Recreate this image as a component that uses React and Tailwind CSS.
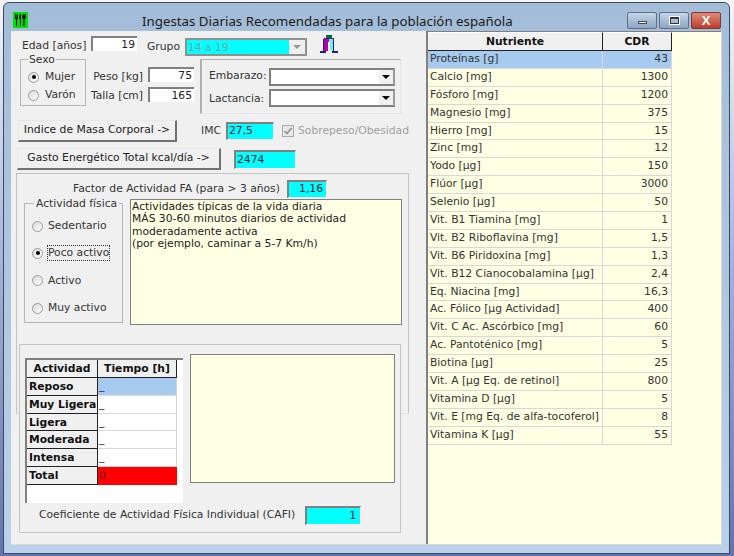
import React from "react";

const nutrientes = [
  ["Proteínas [g]", "43"],
  ["Calcio [mg]", "1300"],
  ["Fósforo [mg]", "1200"],
  ["Magnesio [mg]", "375"],
  ["Hierro [mg]", "15"],
  ["Zinc [mg]", "12"],
  ["Yodo [µg]", "150"],
  ["Flúor [µg]", "3000"],
  ["Selenio [µg]", "50"],
  ["Vit. B1 Tiamina [mg]", "1"],
  ["Vit. B2 Riboflavina [mg]", "1,5"],
  ["Vit. B6 Piridoxina [mg]", "1,3"],
  ["Vit. B12 Cianocobalamina [µg]", "2,4"],
  ["Eq. Niacina [mg]", "16,3"],
  ["Ac. Fólico [µg Actividad]", "400"],
  ["Vit. C Ac. Ascórbico [mg]", "60"],
  ["Ac. Pantoténico [mg]", "5"],
  ["Biotina [µg]", "25"],
  ["Vit. A [µg Eq. de retinol]", "800"],
  ["Vitamina D [µg]", "5"],
  ["Vit. E [mg Eq. de alfa-tocoferol]", "8"],
  ["Vitamina K [µg]", "55"],
];

const actividades = ["Reposo", "Muy Ligera", "Ligera", "Moderada", "Intensa"];

function Field({ value, className }) {
  return (
    <div className={"h-[15px] bg-white border-l-2 border-t-2 border-l-[#808080] border-t-[#808080] pr-[2px] text-right leading-[13px] text-[#222] " + className}>
      {value}
    </div>
  );
}

function CyanField({ value, className }) {
  return (
    <div className={"bg-[#00ffff] border-l-2 border-t-2 border-l-[#808080] border-t-[#808080] border-r border-b border-r-white border-b-white text-[#123] " + className}>
      {value}
    </div>
  );
}

function Radio({ checked, label, focus, gap }) {
  return (
    <div className={"flex items-center " + gap}>
      <span className="w-[11px] h-[11px] rounded-full border border-[#9a9a9a] bg-gradient-to-br from-[#d8d8d8] to-white flex items-center justify-center">
        {checked && <span className="w-[4px] h-[4px] rounded-full bg-black" />}
      </span>
      <span className={focus ? "border border-dotted border-[#333] leading-[14px] -ml-[1px]" : ""}>{label}</span>
    </div>
  );
}

function Combo({ className }) {
  return (
    <div className={"h-[18px] bg-white border-2 border-[#808080] border-r-[#999] flex justify-end " + className}>
      <div className="w-[14px] bg-[#f0f0f0] flex items-center justify-center">
        <span className="w-0 h-0 border-l-[4px] border-r-[4px] border-t-[4px] border-l-transparent border-r-transparent border-t-black" />
      </div>
    </div>
  );
}

function PushButton({ label, className }) {
  return (
    <div className={"h-[22px] bg-[#f0f0f0] border border-[#e8e8e8] border-r-2 border-b-2 border-r-[#707070] border-b-[#707070] flex items-center justify-center text-[#222] " + className}>
      {label}
    </div>
  );
}

function CutleryIcon() {
  return (
    <svg width="15" height="16" viewBox="0 0 15 16" className="shrink-0">
      <rect width="15" height="16" fill="#00e000" />
      <path d="M2 2v5h1v7h1V7h1V2H4.4v4h-.8V2z" fill="#000" />
      <path d="M7 2h1v12H7zM7 2l-1 3 1 3z" fill="#000" />
      <ellipse cx="11" cy="4.5" rx="2" ry="2.5" fill="#000" />
      <rect x="10.4" y="6" width="1.2" height="8" fill="#000" />
    </svg>
  );
}

function FigureIcon() {
  return (
    <svg width="18" height="19" viewBox="0 0 18 19" className="ml-[13px] -mt-[1px] shrink-0">
      <rect x="6" y="0" width="6" height="3" fill="#006a3a" />
      <rect x="4" y="3" width="10" height="1" fill="#303080" />
      <rect x="4" y="4" width="5" height="12" fill="#b000b0" />
      <rect x="9" y="4" width="5" height="12" fill="#70f0f0" />
      <rect x="3" y="4" width="1" height="13" fill="#202070" />
      <rect x="13" y="4" width="1" height="13" fill="#202070" />
      <rect x="8" y="7" width="2" height="10" fill="#f4f4f4" />
      <rect x="0" y="16" width="6" height="2" fill="#202080" />
      <rect x="12" y="16" width="6" height="2" fill="#202080" />
    </svg>
  );
}

function WindowButtons() {
  const base = "h-[17px] w-[30px] rounded-[2px] border border-[#5f6f85] flex items-center justify-center";
  return (
    <div className="flex gap-[2px] mt-[9px] mr-[8px]">
      <div className={base + " bg-gradient-to-b from-[#c6d6e8] to-[#8ba6c4]"}>
        <span className="w-[9px] h-[3px] mt-[4px] bg-white border border-[#445]" />
      </div>
      <div className={base + " bg-gradient-to-b from-[#c6d6e8] to-[#8ba6c4]"}>
        <span className="w-[9px] h-[7px] bg-transparent border border-[#334] border-t-2 outline outline-white" />
      </div>
      <div className={base + " bg-gradient-to-b from-[#dd8a78] to-[#c0392b] border-[#7a3a35] text-white text-[13px] font-bold leading-none"}>
        <span style={{ fontFamily: "Liberation Sans, sans-serif" }}>X</span>
      </div>
    </div>
  );
}

function TablaNutrientes() {
  return (
    <div className="w-[295px] h-full bg-[#ffffe3] border-l-2 border-t border-l-[#808080] border-t-[#808080]">
      <div className="flex h-[19px] font-bold text-[#111] text-center leading-[18px]">
        <div className="w-[175px] bg-[#f0f0f0] border-r border-b border-[#222] border-t border-t-white">Nutriente</div>
        <div className="w-[69px] bg-[#f0f0f0] border-r border-b border-[#222] border-t border-t-white">CDR</div>
      </div>
      {nutrientes.map(([n, v], i) => (
        <div key={n} className={"flex w-[244px] h-[17.9px] leading-[16px] text-[#333] " + (i === 0 ? "bg-[#a6caf0]" : "")}>
          <div className="w-[175px] pl-[2px] border-r border-b border-[#d8d8d8] whitespace-nowrap overflow-hidden">{n}</div>
          <div className="w-[69px] pr-[3px] text-right border-r border-b border-[#d8d8d8]">{v}</div>
        </div>
      ))}
    </div>
  );
}

function TablaActividad() {
  return (
    <div className="w-[158px] h-[145px] bg-white border-l-2 border-t-2 border-[#808080] mt-[4px]">
      <div className="flex h-[18px] font-bold text-[#111] text-center leading-[17px]">
        <div className="w-[71px] bg-[#f0f0f0] border-r border-b border-[#222]">Actividad</div>
        <div className="w-[79px] bg-[#f0f0f0] border-r border-b border-[#222]">Tiempo [h]</div>
      </div>
      {actividades.map((a, i) => (
        <div key={a} className="flex h-[17.8px] leading-[17px]">
          <div className="w-[71px] pl-[2px] font-bold text-[#111] bg-[#f0f0f0] border-r border-b border-[#222] whitespace-nowrap">{a}</div>
          <div className={"w-[79px] pl-[1px] border-r border-b border-[#d8d8d8] leading-[16px] " + (i === 0 ? "bg-[#a6caf0]" : "")}>_</div>
        </div>
      ))}
      <div className="flex h-[17.8px] leading-[17px]">
        <div className="w-[71px] pl-[2px] font-bold text-[#111] bg-[#f0f0f0] border-r border-b border-[#222]">Total</div>
        <div className="w-[79px] pl-[1px] bg-[#ff0000] text-[#700]">0</div>
      </div>
    </div>
  );
}

function PanelIzquierdo() {
  return (
    <div className="w-[414px] shrink-0 pt-[5px] text-[#333]">
      {/* edad y grupo */}
      <div className="flex items-start pl-[11px] h-[23px]">
        <span className="w-[69px] leading-[19px]">Edad [años]</span>
        <Field value="19" className="w-[46px]" />
        <span className="ml-[10px] leading-[22px] w-[38px]">Grupo</span>
        <div className="w-[122px] h-[18px] mt-[2px] border-2 border-[#909090] bg-[#00ffff] flex justify-between text-[#7f9f9f] leading-[15px] pl-[1px]">
          14 a 19
          <div className="w-[16px] bg-[#efefef] flex items-center justify-center">
            <span className="w-0 h-0 border-l-[4px] border-r-[4px] border-t-[4px] border-l-transparent border-r-transparent border-t-[#999]" />
          </div>
        </div>
        <FigureIcon />
      </div>

      {/* sexo, peso, embarazo */}
      <div className="flex items-start pl-[9px] h-[60px]">
        <div className="relative w-[66px] h-[47px] border border-[#b5b5b5] pl-[7px] pt-[9px] flex flex-col gap-[2px]">
          <span className="absolute left-[7px] -top-[6px] bg-[#f0f0f0] leading-[12px] px-[1px]">Sexo</span>
          <Radio checked label="Mujer" gap="gap-[6px]" />
          <Radio label="Varón" gap="gap-[6px]" />
        </div>
        <div className="w-[57px] mt-[10px] flex flex-col gap-[4px] text-right leading-[15px]">
          <span className="whitespace-nowrap">Peso [kg]</span>
          <span className="whitespace-nowrap">Talla [cm]</span>
        </div>
        <div className="flex flex-col gap-[5px] ml-[5px] mt-[8px]">
          <Field value="75" className="w-[46px]" />
          <Field value="165" className="w-[46px]" />
        </div>
        <div className="w-[201px] h-[55px] ml-[6px] border-l-2 border-t border-l-[#b0b0b0] border-t-[#b0b0b0] border-r border-b border-r-[#e4e4e4] border-b-[#e4e4e4] pl-[7px] pt-[8px] flex flex-col gap-[3px]">
          <div className="flex items-start">
            <span className="w-[60px] leading-[15px]">Embarazo:</span>
            <Combo className="w-[126px]" />
          </div>
          <div className="flex items-start">
            <span className="w-[60px] leading-[20px]">Lactancia:</span>
            <Combo className="w-[126px]" />
          </div>
        </div>
      </div>

      {/* IMC */}
      <div className="flex items-center pl-[7px] h-[22px] mt-[1px]">
        <PushButton label="Indice de Masa Corporal ->" className="w-[159px]" />
        <span className="ml-[24px] w-[25px]">IMC</span>
        <CyanField value="27,5" className="w-[48px] h-[18px] leading-[14px] pl-[1px]" />
        <span className="w-[12px] h-[12px] ml-[8px] border border-[#a8a8a8] bg-[#e8e8e8] flex items-center justify-center">
          <svg width="10" height="10" viewBox="0 0 10 10"><path d="M1.5 5l2.5 2.5 4.5-5.5" fill="none" stroke="#8a8a8a" strokeWidth="1.5" /></svg>
        </span>
        <span className="ml-[4px] text-[#a0a0a0] whitespace-nowrap">Sobrepeso/Obesidad</span>
      </div>

      {/* GET */}
      <div className="flex items-center pl-[6px] h-[22px] mt-[6px]">
        <PushButton label="Gasto Energético Total kcal/día ->" className="w-[204px]" />
        <CyanField value="2474" className="w-[62px] h-[19px] ml-[13px] leading-[16px] pl-[1px]" />
      </div>

      {/* factor de actividad */}
      <div className="ml-[5px] mt-[3px] w-[393px] h-[241px] border border-[#c4c4c4] border-b-[#e4e4e4] pt-[5px]">
        <div className="flex items-center h-[20px]">
          <span className="ml-[56px] w-[214px] whitespace-nowrap">Factor de Actividad FA (para &gt; 3 años)</span>
          <CyanField value="1,16" className="w-[40px] h-[18px] text-right pr-[3px] leading-[14px]" />
        </div>
        <div className="flex pl-[7px]">
          <div className="relative w-[99px] h-[120px] border border-[#b5b5b5] pl-[7px] pt-[14px] flex flex-col gap-[11.3px] mt-[4px]">
            <span className="absolute left-[9px] -top-[6px] bg-[#f0f0f0] leading-[12px] px-[2px] whitespace-nowrap">Actividad física</span>
            <Radio label="Sedentario" gap="gap-[5px]" />
            <Radio checked focus label="Poco activo" gap="gap-[5px]" />
            <Radio label="Activo" gap="gap-[5px]" />
            <Radio label="Muy activo" gap="gap-[5px]" />
          </div>
          <div className="w-[272px] h-[126px] ml-[7px] bg-[#ffffe3] border border-[#808080] pl-[1px] pt-[1px] leading-[12.3px] text-[#222] whitespace-pre-line">
            {"Actividades típicas de la vida diaria\nMÁS 30-60 minutos diarios de actividad\nmoderadamente activa\n(por ejemplo, caminar a 5-7 Km/h)"}
          </div>
        </div>
      </div>

      {/* CAFI */}
      <div className="relative ml-[8px] -mt-[70px] w-[382px] h-[189px] bg-[#f0f0f0] border border-[#c4c4c4] pl-[5px] pt-[9px]">
        <div className="flex items-start gap-[7px]">
          <TablaActividad />
          <div className="w-[205px] h-[129px] bg-[#ffffe3] border border-[#808080]" />
        </div>
        <div className="flex items-center mt-[3px]">
          <span className="ml-[14px] w-[266px] whitespace-nowrap">Coeficiente de Actividad Física Individual (CAFI)</span>
          <CyanField value="1" className="w-[56px] h-[19px] text-right pr-[4px] leading-[15px]" />
        </div>
      </div>
    </div>
  );
}

export default function App() {
  return (
    <div className="w-[734px] h-[556px] overflow-hidden bg-gradient-to-b from-[#f4f6fb] via-[#a3aed8] to-[#6672ae] pl-[3px] pt-[2px] text-[10.75px]" style={{ fontFamily: "'DejaVu Sans', sans-serif" }}>
      <div className="w-[727px] h-[552px] rounded-t-[6px] border border-[#3a4a58] bg-gradient-to-b from-[#a3bcd8] to-[#b9d1ea] flex flex-col">
        {/* barra de titulo */}
        <div className="h-[28px] shrink-0 flex items-start">
          <div className="ml-[9px] mt-[9px]"><CutleryIcon /></div>
          <div className="flex-1 pl-[114px] pt-[9px] text-[13.3px] leading-[19px] text-[#1a1a1a] whitespace-nowrap" style={{ fontFamily: "'Noto Sans', sans-serif" }}>
            Ingestas Diarias Recomendadas para la población española
          </div>
          <WindowButtons />
        </div>

        <div className="flex h-[514px] ml-[7px] w-[711px] bg-[#f0f0f0] border-r border-b border-[#d8d8d8]">
          <PanelIzquierdo />
          <div className="w-[1px] shrink-0" />
          <TablaNutrientes />
        </div>
      </div>
    </div>
  );
}
